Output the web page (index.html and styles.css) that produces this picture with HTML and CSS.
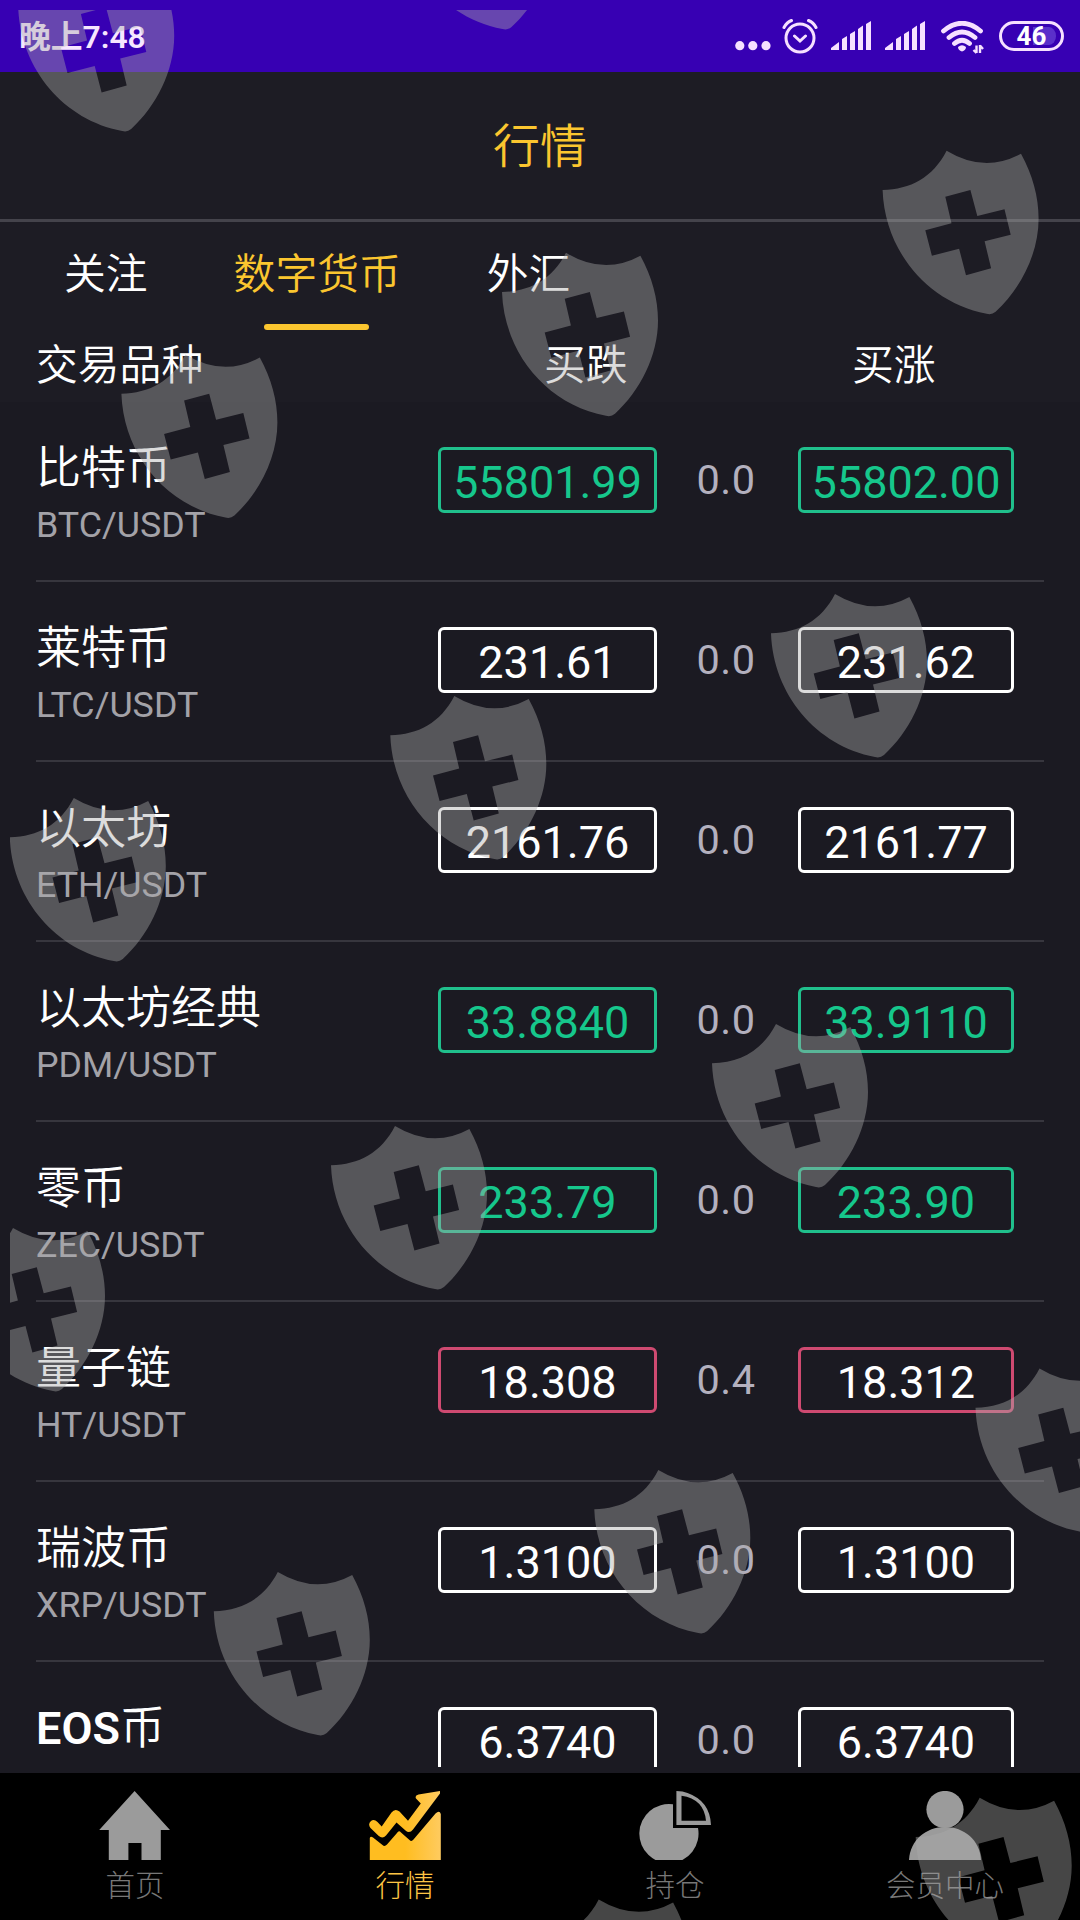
FILE: index.html
```
<!DOCTYPE html>
<html lang="zh-CN">
<head>
  <meta charset="UTF-8" />
  <meta name="viewport" content="width=device-width, initial-scale=1.0" />
  <title>行情</title>
  <link rel="stylesheet" href="styles.css">
</head>
<body>
  <div class="app">
    <div class="status-bar">
      <span class="time">晚上7:48</span>
      <div class="status-icons">
        <svg class="dots" width="28" height="32" viewBox="0 0 28 32">
          <circle cx="4.8" cy="25.7" r="4.6" /><circle cx="17.8" cy="25.7" r="4.6" /><circle cx="31" cy="25.7" r="4.6" />
        </svg>
        <svg class="alarm" width="36" height="36" viewBox="0 0 36 36">
          <circle cx="18" cy="20" r="14" />
          <path d="M12.5 18l5.500 5 5.500-5M2 9.500Q4.500 4.500 9.500 2.500M34 9.500Q31.500 4.500 26.500 2.500" />
        </svg>
        <svg class="signal" width="41" height="30" viewBox="0 0 41 30">
          <path d="M0 29V27L8 21V29ZM11 29V18L16 15V29ZM19 29V13L24 10V29ZM27 29V8L32 4.500V29ZM35 29V3L40 0V29Z" />
        </svg>
        <svg class="signal" width="41" height="30" viewBox="0 0 41 30">
          <path d="M0 29V27L8 21V29ZM11 29V18L16 15V29ZM19 29V13L24 10V29ZM27 29V8L32 4.500V29ZM35 29V3L40 0V29Z" />
        </svg>
        <svg class="wifi" width="44" height="34" viewBox="0 0 44 34">
          <path class="arc" d="M2.500 10Q21 -5.500 39.500 10M8 16.500Q21 5.500 34 16.500M13.500 22.500Q21 16 28.500 22.500" />
          <path d="M17 26Q21 22.500 25 26Q25 29 21 30.500Q17 29 17 26Z" />
          <path class="arrows" d="M35.500 32V24.500M32.500 29L35.500 32M39 24V32M39 24.500L42 28" />
        </svg>
        <div class="battery"><span>46</span></div>
      </div>
    </div>

    <header class="header">行情</header>

    <nav class="tabs">
      <div class="tab">关注</div>
      <div class="tab active">数字货币</div>
      <div class="tab">外汇</div>
    </nav>

    <div class="columns">
      <div class="col-name">交易品种</div>
      <div class="col-down">买跌</div>
      <div class="col-up">买涨</div>
    </div>

    <main class="list">
      <div class="row">
        <div class="coin"><div class="name">比特币</div><div class="code">BTC/USDT</div></div>
        <div class="price green">55801.99</div>
        <div class="spread">0.0</div>
        <div class="price green">55802.00</div>
      </div>
      <div class="row">
        <div class="coin"><div class="name">莱特币</div><div class="code">LTC/USDT</div></div>
        <div class="price">231.61</div>
        <div class="spread">0.0</div>
        <div class="price">231.62</div>
      </div>
      <div class="row">
        <div class="coin"><div class="name">以太坊</div><div class="code">ETH/USDT</div></div>
        <div class="price">2161.76</div>
        <div class="spread">0.0</div>
        <div class="price">2161.77</div>
      </div>
      <div class="row">
        <div class="coin"><div class="name">以太坊经典</div><div class="code">PDM/USDT</div></div>
        <div class="price green">33.8840</div>
        <div class="spread">0.0</div>
        <div class="price green">33.9110</div>
      </div>
      <div class="row">
        <div class="coin"><div class="name">零币</div><div class="code">ZEC/USDT</div></div>
        <div class="price green">233.79</div>
        <div class="spread">0.0</div>
        <div class="price green">233.90</div>
      </div>
      <div class="row">
        <div class="coin"><div class="name">量子链</div><div class="code">HT/USDT</div></div>
        <div class="price red">18.308</div>
        <div class="spread">0.4</div>
        <div class="price red">18.312</div>
      </div>
      <div class="row">
        <div class="coin"><div class="name">瑞波币</div><div class="code">XRP/USDT</div></div>
        <div class="price">1.3100</div>
        <div class="spread">0.0</div>
        <div class="price">1.3100</div>
      </div>
      <div class="row">
        <div class="coin"><div class="name"><b>EOS</b>币</div></div>
        <div class="price">6.3740</div>
        <div class="spread">0.0</div>
        <div class="price">6.3740</div>
      </div>
    </main>

    <footer class="bottom-nav">
      <div class="nav-item">
        <svg width="72" height="69" viewBox="0 0 72 69">
          <path d="M35.600 0L71 39H61.800V69H42.500V52H29.400V69H9.800V39H0.200Z" />
        </svg>
        <span>首页</span>
      </div>
      <div class="nav-item active">
        <svg width="72" height="69" viewBox="0 0 72 69">
          <defs>
            <linearGradient id="gold" x1="0" y1="0" x2="1" y2="0">
              <stop offset="0.500" stop-color="#ffbd20" />
              <stop offset="1" stop-color="#ffcb5f" />
            </linearGradient>
          </defs>
          <path fill="url(#gold)" d="M1.500 37Q-1.500 33 2 30Q5 27.500 8.500 31L12.700 35.500L22.500 21.500Q26 17 30.500 20.500L39 29.700L51.800 12.500L47 7.500Q45.500 4.500 49.500 3.500L71 0V2.500L44 38.500Q40.500 43 36.500 39.500L27.500 31.500L17 44.500Q13.500 48.500 9.500 44.800Z" />
          <path fill="url(#gold)" d="M0.800 69V47Q1.500 45 4 46.500L13.500 54Q15.600 56 18 53.500L28 42Q29.800 39 32 41.500L40.500 49Q42.500 51 44.500 48.500L66.500 22.500Q70.500 19 71.800 23V69Z" />
        </svg>
        <span>行情</span>
      </div>
      <div class="nav-item">
        <svg width="72" height="69" viewBox="0 0 72 69">
          <path d="M34 13.300A29.600 29.600 0 1 0 59 37H34Z" />
          <path fill-rule="evenodd" d="M37.400 0Q44 0 48.500 2Q71 10 72 34H37.400ZM42.500 4.700V29.700H67Q65 8 42.500 4.700Z" />
        </svg>
        <span>持仓</span>
      </div>
      <div class="nav-item">
        <svg width="72" height="69" viewBox="0 0 72 69">
          <circle cx="36" cy="18.500" r="18.600" />
          <path d="M0 69C1 49 17 36 36 36S71 49 72 69Z" />
        </svg>
        <span>会员中心</span>
      </div>
    </footer>

    <!-- shield pattern over the whole screen -->
    <svg class="watermark" viewBox="10 10 1070 1910">
      <defs>
        <path id="shield" fill-rule="evenodd" d="M0 39.300C28 38.500 50 27 64 0Q102 23 138.400 3C150 24 156 46 156 68C156 103 138 138 113 161Q109 164.500 104 163C45 152 2 100 0 39.300ZM62.700 46L87.800 39.300L94.700 65.300L121.900 58.600L128.100 84L102 90.600L108.500 117.600L83.400 124.600L76.500 98L49.300 105L42.700 79.600L68.900 72.600Z" />
      </defs>
      <use href="#shield" x="18.200" y="-32" />
      <use href="#shield" x="398.500" y="-134" />
      <use href="#shield" x="882.600" y="150.700" />
      <use href="#shield" x="502" y="252.800" />
      <use href="#shield" x="121.400" y="354.500" />
      <use href="#shield" x="771" y="594" />
      <use href="#shield" x="390.300" y="696" />
      <use href="#shield" x="9.800" y="798" />
      <use href="#shield" x="712" y="1024" />
      <use href="#shield" x="331" y="1126" />
      <use href="#shield" x="-51" y="1228" />
      <use href="#shield" x="975.500" y="1368.500" />
      <use href="#shield" x="594.300" y="1470" />
      <use href="#shield" x="213.800" y="1572" />
      <use href="#shield" x="915.700" y="1797.700" />
      <use href="#shield" x="534.700" y="1899.500" />
    </svg>
  </div>
</body>
</html>
```
FILE: styles.css
```
* {
  box-sizing: border-box;
}

body {
  margin: 0;
  background: #1b1a22;
  color: #fff;
  font-family: Roboto, 'Noto Sans CJK SC', sans-serif;
}

.app {
  position: relative;
  display: flex;
  flex-direction: column;
  width: 1080px;
  height: 1920px;
  overflow: hidden;
}

.status-bar {
  display: flex;
  justify-content: space-between;
  height: 72px;
  padding: 0 16px 0 19px;
  background: #3700b3;
  color: #f6e6ff;
}

.time {
  font-size: 31.8px;
  font-weight: 600;
  line-height: 74px;
}

.status-icons {
  display: flex;
  align-items: flex-start;
  padding-top: 20px;
  fill: #f6e0ff;
}

.dots {
  margin-right: 19px;
  overflow: visible;
}

.alarm {
  margin: -2px 13px 0 0;
  fill: none;
  stroke: #f6e0ff;
  stroke-width: 3;
  stroke-linecap: round;
}

.signal {
  margin: 1px 13px 0 0;
}

.wifi {
  margin: 1px 14px 0 2px;
}

.wifi .arc {
  fill: none;
  stroke: #f6e0ff;
  stroke-width: 4.8;
  stroke-linecap: round;
}

.wifi .arrows {
  fill: none;
  stroke: #f6e0ff;
  stroke-width: 2.4;
}

.battery {
  width: 65px;
  height: 30px;
  margin-top: 1px;
  padding: 3px 5px;
  border: 3px solid #f6e0ff;
  border-radius: 15px;
  background: linear-gradient(to right, transparent 54%, #5a30ca 54%) content-box;
  color: #fff;
  font-size: 26px;
  font-weight: 700;
  line-height: 19px;
  text-align: center;
}

.header {
  height: 150px;
  border-bottom: 3px solid #44434b;
  background: #1d1c24;
  color: #fbc62f;
  font-size: 47px;
  font-weight: 350;
  line-height: 149px;
  text-align: center;
}

.tabs {
  display: flex;
  gap: 86px;
  height: 108px;
  padding-left: 64px;
  background: #1d1c24;
  font-size: 41.8px;
  font-weight: 350;
}

.tab {
  display: flex;
  flex-direction: column;
  align-items: center;
  line-height: 106px;
}

.tab.active {
  color: #fbc62f;
}

.tab.active::after {
  content: '';
  width: 105px;
  height: 6px;
  margin: -4px 2px 0 0;
  border-radius: 3px;
  background: #fbc62f;
}

.columns {
  display: flex;
  height: 72px;
  padding: 0 66px 0 36px;
  background: #1d1c24;
  font-size: 41.8px;
  font-weight: 350;
  line-height: 71px;
}

.col-name {
  flex: 1;
}

.col-down {
  width: 171px;
  margin-right: 137px;
}

.col-up {
  width: 162px;
}

.list {
  height: 1365px;
  margin: 0 36px;
  overflow: hidden;
}

.row {
  display: flex;
  height: 180px;
  padding: 45px 30px 0 0;
  border-bottom: 2px solid #37363e;
}

.coin {
  flex: 1;
}

.name {
  margin-top: -4px;
  font-size: 45px;
  font-weight: 350;
  line-height: 52px;
}

.name b {
  font-weight: 600;
}

.code {
  margin-top: 8px;
  color: #a3a2a8;
  font-size: 35.8px;
  line-height: 44px;
}

.price {
  width: 219px;
  height: 66px;
  border: 3px solid #fff;
  border-radius: 6px;
  font-size: 45px;
  line-height: 65px;
  text-align: center;
}

.price:last-child {
  width: 216px;
}

.price.green {
  border-color: #20bf8c;
  color: #16c78c;
}

.price.red {
  border-color: #cf4a71;
}

.spread {
  width: 141px;
  padding-right: 3px;
  color: #b3b0be;
  font-size: 41.5px;
  letter-spacing: 0.5px;
  line-height: 66px;
  text-align: center;
}

.bottom-nav {
  display: flex;
  height: 147px;
  margin-top: 6px;
  background: #000;
}

.nav-item {
  display: flex;
  flex: 1;
  flex-direction: column;
  align-items: center;
  padding-top: 18px;
  color: #777;
  fill: #9b9b9b;
  font-size: 29.5px;
  font-weight: 300;
  line-height: 52px;
}

.nav-item.active {
  color: #fdc545;
}

.watermark {
  position: absolute;
  top: 10px;
  left: 10px;
  width: 1070px;
  height: 1910px;
  fill: #ababab;
  opacity: 0.41;
  pointer-events: none;
}
```
